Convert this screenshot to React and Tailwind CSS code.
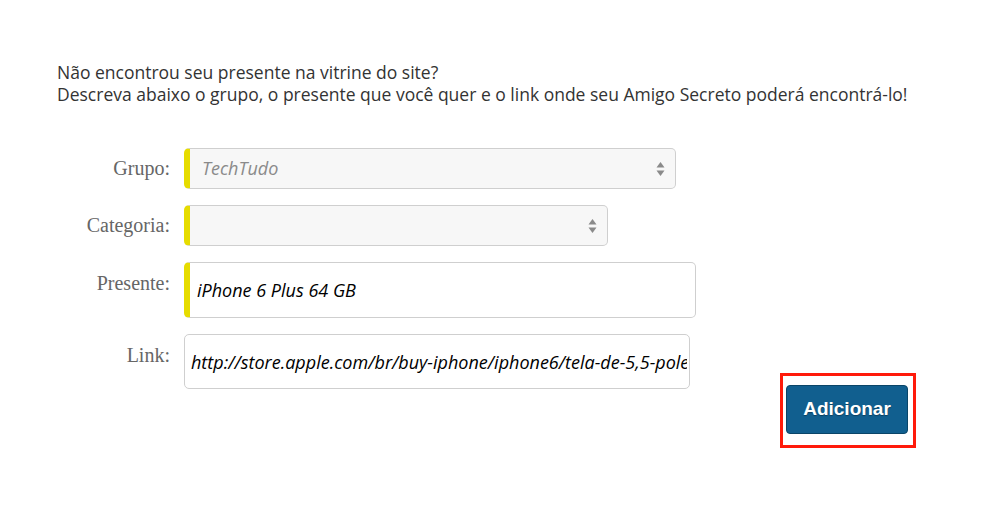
import React from "react";

function Arrows() {
  return (
    <svg width="9" height="16" viewBox="0 0 9 16" className="shrink-0">
      <path d="M4.5 1 L8.5 6.5 L0.5 6.5 Z" fill="#8a8a8a" />
      <path d="M4.5 15 L8.5 9.5 L0.5 9.5 Z" fill="#8a8a8a" />
    </svg>
  );
}

function Label({ children, pad }) {
  return (
    <div
      className={`w-[113px] shrink-0 text-right text-[20px] leading-[22px] text-[#666] ${pad}`}
      style={{ fontFamily: '"Liberation Serif", "Times New Roman", serif' }}
    >
      {children}
    </div>
  );
}

export default function App() {
  const sans = { fontFamily: '"Open Sans", "Liberation Sans", sans-serif' };
  return (
    <div className="min-h-[508px] w-[984px] bg-white pt-[61px]">
      <div className="pl-[57px] text-[17.5px] leading-[22px] text-[#333]" style={sans}>
        <p>Não encontrou seu presente na vitrine do site?</p>
        <p>Descreva abaixo o grupo, o presente que você quer e o link onde seu Amigo Secreto poderá encontrá-lo!</p>
      </div>

      <div className="mt-[43px] flex flex-col gap-[16px] pl-[57px]">
        {/* Grupo */}
        <div className="flex items-start gap-[14px]">
          <Label pad="pt-[9px]">Grupo:</Label>
          <div className="flex h-[41px] w-[492px] items-center rounded-[5px] border border-[#cfcfcf] border-l-[6px] border-l-[#e6dc00] bg-[#f7f7f7] pl-[12px] pr-[10px]">
            <span className="flex-1 text-[18px] italic text-[#8a8a8a]" style={sans}>TechTudo</span>
            <Arrows />
          </div>
        </div>

        {/* Categoria */}
        <div className="flex items-start gap-[14px]">
          <Label pad="pt-[9px]">Categoria:</Label>
          <div className="flex h-[41px] w-[424px] items-center rounded-[5px] border border-[#cfcfcf] border-l-[6px] border-l-[#e6dc00] bg-[#f7f7f7] pl-[12px] pr-[10px]">
            <span className="flex-1" />
            <Arrows />
          </div>
        </div>

        {/* Presente */}
        <div className="flex items-start gap-[14px]">
          <Label pad="pt-[10px]">Presente:</Label>
          <input
            readOnly
            value="iPhone 6 Plus 64 GB"
            className="h-[56px] w-[512px] rounded-[5px] border border-[#cfcfcf] border-l-[6px] border-l-[#e6dc00] bg-white pl-[7px] text-[18px] italic text-black outline-none"
            style={sans}
          />
        </div>

        {/* Link */}
        <div className="flex items-start gap-[14px]">
          <Label pad="pt-[10px]">Link:</Label>
          <input
            readOnly
            value="http://store.apple.com/br/buy-iphone/iphone6/tela-de-5,5-polegadas"
            className="h-[55px] w-[506px] rounded-[5px] border border-[#cfcfcf] bg-white pl-[6px] pr-[2px] text-[18px] italic text-black outline-none"
            style={sans}
          />
        </div>
      </div>

      <div className="-mt-[16px] pl-[780px]">
        <div className="inline-flex border-[3px] border-[#ff1a0a] pb-[11px] pl-[3px] pr-[5px] pt-[9px]">
          <button
            className="h-[49px] w-[122px] rounded-[4px] border border-[#0a4568] bg-[#115f8f] text-[19px] font-bold text-white [text-shadow:0_1px_1px_rgba(0,0,0,0.35)]"
            style={{ fontFamily: '"Liberation Sans", Arial, sans-serif' }}
          >
            Adicionar
          </button>
        </div>
      </div>
    </div>
  );
}
